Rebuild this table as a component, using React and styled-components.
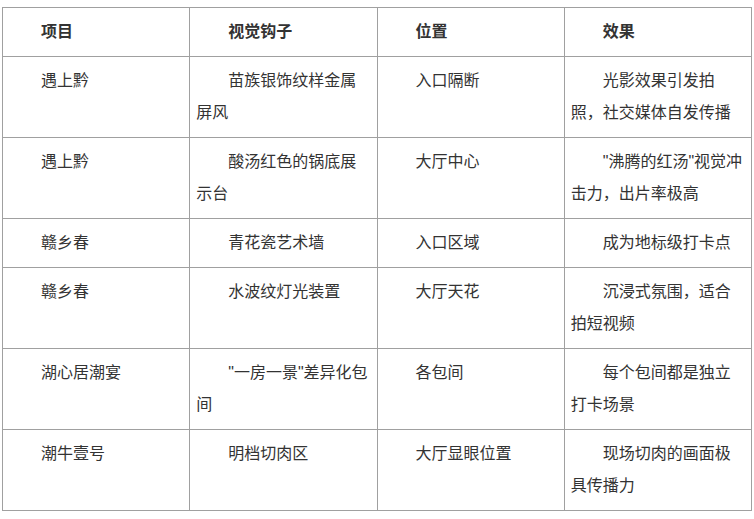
import styled, { createGlobalStyle } from "styled-components";

const GlobalStyle = createGlobalStyle`
  html, body {
    margin: 0;
    padding: 0;
    background: #fff;
  }
  body {
    font-family: "Liberation Sans", "Noto Sans CJK SC", sans-serif;
    color: #333;
  }
`;

const Wrapper = styled.div`
  padding: 7px 2px 0 2px;
`;

const Table = styled.table`
  width: 750px;
  border-collapse: collapse;
  table-layout: fixed;
  font-size: 16px;
`;

const HeadCell = styled.th`
  border: 1px solid #a0a0a0;
  padding: 8px 6px;
  line-height: 32px;
  text-align: left;
  text-indent: 2em;
  font-weight: bold;
  color: #333;
  vertical-align: top;
`;

const Cell = styled.td`
  border: 1px solid #a0a0a0;
  padding: 8px 6px;
  line-height: 32px;
  text-indent: 2em;
  color: #333;
  vertical-align: top;
  word-break: break-all;
`;

const rows = [
  ["遇上黔", "苗族银饰纹样金属屏风", "入口隔断", "光影效果引发拍照，社交媒体自发传播"],
  ["遇上黔", "酸汤红色的锅底展示台", "大厅中心", "\"沸腾的红汤\"视觉冲击力，出片率极高"],
  ["赣乡春", "青花瓷艺术墙", "入口区域", "成为地标级打卡点"],
  ["赣乡春", "水波纹灯光装置", "大厅天花", "沉浸式氛围，适合拍短视频"],
  ["湖心居潮宴", "\"一房一景\"差异化包间", "各包间", "每个包间都是独立打卡场景"],
  ["潮牛壹号", "明档切肉区", "大厅显眼位置", "现场切肉的画面极具传播力"],
];

const headers = ["项目", "视觉钩子", "位置", "效果"];

export default function App() {
  return (
    <>
      <GlobalStyle />
      <Wrapper>
        <Table>
          <thead>
            <tr>
              {headers.map((h) => (
                <HeadCell key={h}>{h}</HeadCell>
              ))}
            </tr>
          </thead>
          <tbody>
            {rows.map((row, i) => (
              <tr key={i}>
                {row.map((c, j) => (
                  <Cell key={j}>{c}</Cell>
                ))}
              </tr>
            ))}
          </tbody>
        </Table>
      </Wrapper>
    </>
  );
}
